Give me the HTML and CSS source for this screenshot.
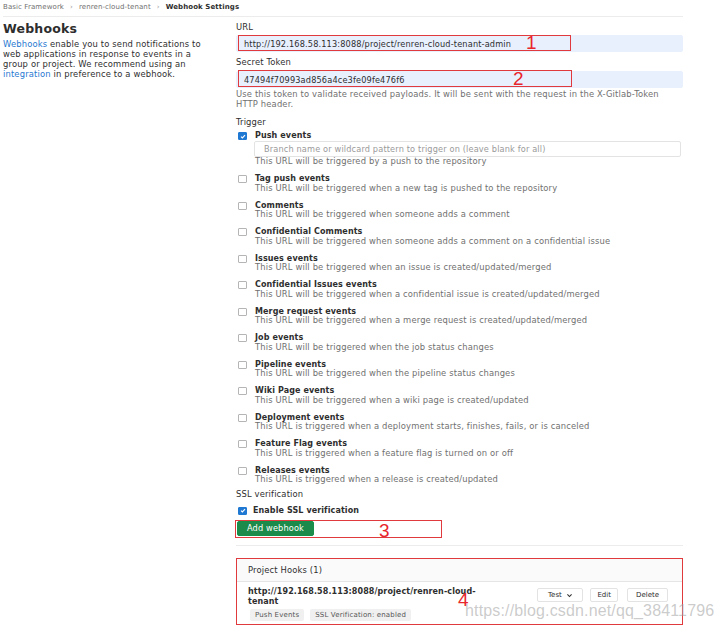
FILE: index.html
```html
<!DOCTYPE html>
<html lang="en">
<head>
    <meta charset="UTF-8">
    <title>Webhook Settings</title>
    <link rel="stylesheet" href="styles.css">
</head>
<body>
    <div class="page">
        <nav class="breadcrumbs">
            <span>Basic Framework</span>
            <span class="sep">&rsaquo;</span>
            <span>renren-cloud-tenant</span>
            <span class="sep">&rsaquo;</span>
            <strong>Webhook Settings</strong>
        </nav>

        <div class="layout">
            <aside class="sidebar">
                <h4>Webhooks</h4>
                <p><a href="#">Webhooks</a> enable you to send notifications to web applications in response to events in a group or project. We recommend using an <a href="#">integration</a> in preference to a webhook.</p>
            </aside>

            <main class="content">
                <div class="field">
                    <label class="field-label">URL</label>
                    <div class="input-wrap">
                        <input class="text-input filled" type="text" value="http://192.168.58.113:8088/project/renren-cloud-tenant-admin">
                        <span class="annot annot-url"></span>
                        <span class="mark mark-1">1</span>
                    </div>
                </div>

                <div class="field">
                    <label class="field-label">Secret Token</label>
                    <div class="input-wrap">
                        <input class="text-input filled" type="text" value="47494f70993ad856a4ce3fe09fe476f6">
                        <span class="annot annot-token"></span>
                        <span class="mark mark-2">2</span>
                    </div>
                    <p class="help">Use this token to validate received payloads. It will be sent with the request in the X-Gitlab-Token HTTP header.</p>
                </div>

                <div class="field-label trigger-title">Trigger</div>
                <ul class="triggers">
                    <li class="trigger">
                        <span class="check checked"><svg viewBox="0 0 10 10"><path d="M2.2 5.2l1.9 1.9 3.8-4" fill="none" stroke="#fff" stroke-width="1.6"/></svg></span>
                        <div>
                            <strong>Push events</strong>
                            <input class="text-input branch" type="text" placeholder="Branch name or wildcard pattern to trigger on (leave blank for all)">
                            <p class="desc">This URL will be triggered by a push to the repository</p>
                        </div>
                    </li>
                    <li class="trigger">
                        <span class="check"></span>
                        <div><strong>Tag push events</strong><p class="desc">This URL will be triggered when a new tag is pushed to the repository</p></div>
                    </li>
                    <li class="trigger">
                        <span class="check"></span>
                        <div><strong>Comments</strong><p class="desc">This URL will be triggered when someone adds a comment</p></div>
                    </li>
                    <li class="trigger">
                        <span class="check"></span>
                        <div><strong>Confidential Comments</strong><p class="desc">This URL will be triggered when someone adds a comment on a confidential issue</p></div>
                    </li>
                    <li class="trigger">
                        <span class="check"></span>
                        <div><strong>Issues events</strong><p class="desc">This URL will be triggered when an issue is created/updated/merged</p></div>
                    </li>
                    <li class="trigger">
                        <span class="check"></span>
                        <div><strong>Confidential Issues events</strong><p class="desc">This URL will be triggered when a confidential issue is created/updated/merged</p></div>
                    </li>
                    <li class="trigger">
                        <span class="check"></span>
                        <div><strong>Merge request events</strong><p class="desc">This URL will be triggered when a merge request is created/updated/merged</p></div>
                    </li>
                    <li class="trigger">
                        <span class="check"></span>
                        <div><strong>Job events</strong><p class="desc">This URL will be triggered when the job status changes</p></div>
                    </li>
                    <li class="trigger">
                        <span class="check"></span>
                        <div><strong>Pipeline events</strong><p class="desc">This URL will be triggered when the pipeline status changes</p></div>
                    </li>
                    <li class="trigger">
                        <span class="check"></span>
                        <div><strong>Wiki Page events</strong><p class="desc">This URL will be triggered when a wiki page is created/updated</p></div>
                    </li>
                    <li class="trigger">
                        <span class="check"></span>
                        <div><strong>Deployment events</strong><p class="desc">This URL is triggered when a deployment starts, finishes, fails, or is canceled</p></div>
                    </li>
                    <li class="trigger">
                        <span class="check"></span>
                        <div><strong>Feature Flag events</strong><p class="desc">This URL is triggered when a feature flag is turned on or off</p></div>
                    </li>
                    <li class="trigger">
                        <span class="check"></span>
                        <div><strong>Releases events</strong><p class="desc">This URL is triggered when a release is created/updated</p></div>
                    </li>
                </ul>

                <div class="field-label ssl-title">SSL verification</div>
                <div class="ssl-row">
                    <span class="check checked"><svg viewBox="0 0 10 10"><path d="M2.2 5.2l1.9 1.9 3.8-4" fill="none" stroke="#fff" stroke-width="1.6"/></svg></span>
                    <strong>Enable SSL verification</strong>
                </div>

                <div class="submit-wrap">
                    <button class="btn-success">Add webhook</button>
                    <span class="annot annot-submit"></span>
                    <span class="mark mark-3">3</span>
                </div>

                <hr class="divider">

                <div class="panel">
                    <div class="panel-header">Project Hooks (1)</div>
                    <div class="hook">
                        <div class="hook-info">
                            <div class="hook-url">http://192.168.58.113:8088/project/renren-cloud-tenant</div>
                            <div class="badges">
                                <span class="badge">Push Events</span>
                                <span class="badge">SSL Verification: enabled</span>
                            </div>
                        </div>
                        <div class="hook-actions">
                            <button class="btn btn-test">Test <svg viewBox="0 0 10 10"><path d="M2 3.5l3 3 3-3" fill="none" stroke="#333" stroke-width="1.6"/></svg></button>
                            <button class="btn">Edit</button>
                            <button class="btn">Delete</button>
                        </div>
                    </div>
                    <span class="annot annot-panel"></span>
                    <span class="mark mark-4">4</span>
                </div>
            </main>
        </div>
    </div>
    <div class="watermark">https://blog.csdn.net/qq_38411796</div>
</body>
</html>
```

FILE: styles.css
```css
body {
    margin: 0;
    background: #fff;
    color: #2e2e2e;
    font-family: "DejaVu Sans", "Open Sans", sans-serif;
    font-size: 8.4px;
    letter-spacing: 0.15px;
    overflow: hidden;
}

.page {
    padding: 0 36px 0 3px;
}

a {
    color: #1f78d1;
    text-decoration: none;
}

.breadcrumbs {
    height: 16px;
    line-height: 14px;
    border-bottom: 1px solid #ececec;
    font-size: 7px;
    letter-spacing: 0.1px;
    color: #707070;
    display: flex;
    gap: 6px;
}

.breadcrumbs strong {
    color: #2e2e2e;
    font-weight: 700;
}

.breadcrumbs .sep {
    color: #999;
}

.layout {
    display: flex;
    padding-top: 5px;
}

.sidebar {
    width: 233px;
    flex-shrink: 0;
}

.sidebar h4 {
    margin: -1px 0 0;
    font-size: 12.5px;
    line-height: 16px;
    font-weight: 700;
    letter-spacing: 0.2px;
}

.sidebar p {
    margin: 2px 0 0;
    width: 206px;
    line-height: 10px;
}

.content {
    flex: 1;
    position: relative;
}

.field-label {
    display: block;
    line-height: 10px;
    margin-bottom: 3px;
}

.field + .field {
    margin-top: 5px;
}

.field + .field .field-label {
    margin-bottom: 4px;
}

.input-wrap,
.submit-wrap {
    position: relative;
}

.text-input {
    display: block;
    box-sizing: border-box;
    width: 100%;
    height: 17px;
    margin: 0;
    padding: 0 7px;
    border: 1px solid #e3e3e3;
    border-radius: 2px;
    font-family: inherit;
    font-size: 8.2px;
    letter-spacing: 0.15px;
    color: #2e2e2e;
    background: #fff;
    outline: none;
}

.text-input.filled {
    background: #e8f0fe;
    border-color: #e8f0fe;
}

.text-input::placeholder {
    color: #9a9a9a;
}

.help {
    margin: 2px 0 0;
    width: 432px;
    line-height: 9.5px;
    color: #707070;
}

.trigger-title {
    margin-top: 8px;
    margin-bottom: 4px;
}

.triggers {
    list-style: none;
    margin: 0;
    padding: 0;
}

.trigger {
    display: grid;
    grid-template-columns: 19px 1fr;
    margin-bottom: 7.5px;
}

.trigger:first-child {
    margin-bottom: 8.25px;
}

.trigger:last-child {
    margin-bottom: 4px;
}

.trigger strong,
.ssl-row strong {
    display: block;
    font-size: 8px;
    letter-spacing: 0.1px;
    line-height: 9.5px;
    font-weight: 700;
}

.trigger .desc {
    margin: 0;
    line-height: 9.5px;
    color: #707070;
}

.branch {
    height: 16px;
    margin-left: -1px;
    width: calc(100% - 1px);
    padding-left: 9px;
}

.check {
    box-sizing: border-box;
    width: 9px;
    height: 8px;
    margin: 1px 0 0 2px;
    border: 1px solid #b5b5b5;
    border-radius: 1px;
    background: #fff;
    display: block;
}

.check.checked {
    background: #1f78d1;
    border-color: #1f78d1;
}

.check svg {
    display: block;
    width: 8px;
    height: 7px;
    margin: -0.5px 0 0 -0.5px;
}

.ssl-title {
    margin-bottom: 7px;
}

.ssl-row {
    display: grid;
    grid-template-columns: 19px 1fr;
    margin-bottom: 6px;
}

.ssl-row strong {
    margin-left: -2px;
}

.btn-success {
    display: block;
    height: 15px;
    width: 77px;
    margin-left: 1px;
    padding: 0;
    border: 1px solid #168f48;
    border-radius: 2px;
    background: #1b8a4a;
    color: #fff;
    font-family: inherit;
    font-size: 8.2px;
    letter-spacing: 0.15px;
    line-height: 13px;
}

.divider {
    margin: 9px 0 12px;
    border: 0;
    border-top: 1px solid #ececec;
}

.panel {
    position: relative;
    border: 1px solid #e5e5e5;
}

.panel-header {
    height: 22px;
    line-height: 22px;
    padding-left: 11px;
    background: #fafafa;
    border-bottom: 1px solid #e5e5e5;
}

.hook {
    display: flex;
    justify-content: space-between;
    align-items: flex-start;
    padding: 5px 14px 3px 11px;
}

.hook-url {
    width: 236px;
    line-height: 10px;
    font-size: 8px;
    letter-spacing: 0.1px;
    font-weight: 700;
}

.badges {
    display: flex;
    gap: 6px;
    margin-top: 2px;
    margin-left: 2px;
}

.badge {
    height: 12px;
    line-height: 12px;
    padding: 0 5px;
    background: #f0f0f0;
    border-radius: 2px;
    color: #555;
    font-size: 7px;
}

.hook-actions {
    display: flex;
    gap: 6px;
    margin-top: 1px;
}

.btn {
    display: flex;
    align-items: center;
    justify-content: center;
    gap: 4px;
    height: 14px;
    padding: 0 6px;
    border: 1px solid #e3e3e3;
    border-radius: 2px;
    background: #fff;
    color: #2e2e2e;
    font-family: inherit;
    font-size: 7px;
}

.btn-test {
    width: 46px;
    margin-right: 1px;
}

.btn:last-child {
    margin-left: 3px;
    padding: 0 8px;
}

.btn svg {
    width: 7px;
    height: 7px;
}

/* red annotations drawn over the screenshot */
.annot {
    position: absolute;
    border: 1px solid #e0393e;
    pointer-events: none;
}

.annot-url {
    left: 2px;
    top: 0;
    width: 333px;
    height: 16px;
    box-sizing: border-box;
}

.annot-token {
    left: 2px;
    top: -1px;
    width: 334px;
    height: 17px;
    box-sizing: border-box;
}

.annot-submit {
    left: -1px;
    top: -1px;
    width: 207px;
    height: 18px;
    box-sizing: border-box;
}

.annot-panel {
    left: -1px;
    top: -1px;
    right: -1px;
    bottom: -1px;
}

.mark {
    position: absolute;
    color: #e8262b;
    font-family: "Liberation Sans", sans-serif;
    font-size: 19px;
    line-height: 19px;
}

.mark-1 { left: 290px; top: -2px; }
.mark-2 { left: 277px; top: -2px; }
.mark-3 { left: 143px; top: 0; }
.mark-4 { left: 221px; top: 31px; }

.watermark {
    position: absolute;
    left: 465px;
    top: 602px;
    font-family: "Liberation Sans", sans-serif;
    font-size: 16px;
    color: rgba(160, 160, 160, 0.55);
    white-space: nowrap;
}
```
